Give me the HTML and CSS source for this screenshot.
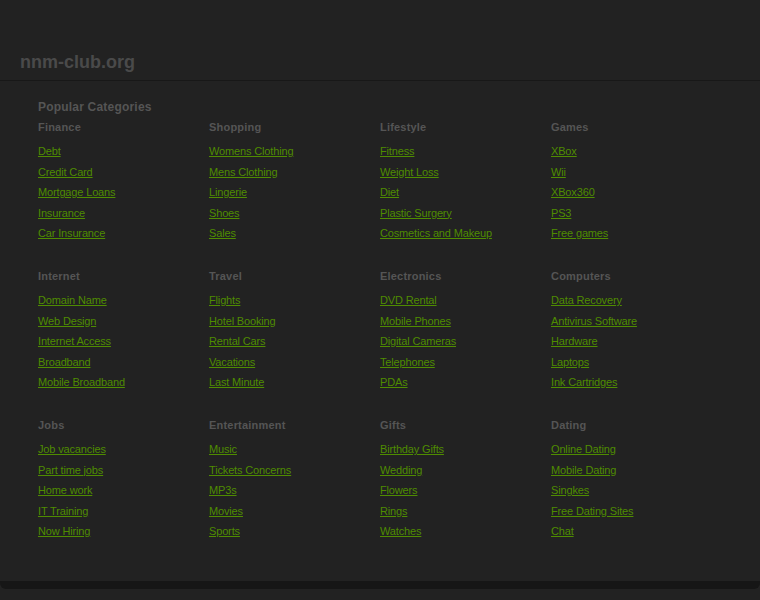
FILE: index.html
```html
<!DOCTYPE html>
<html>
<head>
<meta charset="utf-8">
<title>nnm-club.org</title>
<link rel="stylesheet" href="styles.css">
</head>
<body>
<div class="header"><span class="site">nnm-club.org</span></div>
<div class="content">
  <h2 class="title">Popular Categories</h2>
  <div class="grid">
    <div class="cat"><h3>Finance</h3><ul><li><a href="#">Debt</a></li><li><a href="#">Credit Card</a></li><li><a href="#">Mortgage Loans</a></li><li><a href="#">Insurance</a></li><li><a href="#">Car Insurance</a></li></ul></div>
    <div class="cat"><h3>Shopping</h3><ul><li><a href="#">Womens Clothing</a></li><li><a href="#">Mens Clothing</a></li><li><a href="#">Lingerie</a></li><li><a href="#">Shoes</a></li><li><a href="#">Sales</a></li></ul></div>
    <div class="cat"><h3>Lifestyle</h3><ul><li><a href="#">Fitness</a></li><li><a href="#">Weight Loss</a></li><li><a href="#">Diet</a></li><li><a href="#">Plastic Surgery</a></li><li><a href="#">Cosmetics and Makeup</a></li></ul></div>
    <div class="cat"><h3>Games</h3><ul><li><a href="#">XBox</a></li><li><a href="#">Wii</a></li><li><a href="#">XBox360</a></li><li><a href="#">PS3</a></li><li><a href="#">Free games</a></li></ul></div>
    <div class="cat"><h3>Internet</h3><ul><li><a href="#">Domain Name</a></li><li><a href="#">Web Design</a></li><li><a href="#">Internet Access</a></li><li><a href="#">Broadband</a></li><li><a href="#">Mobile Broadband</a></li></ul></div>
    <div class="cat"><h3>Travel</h3><ul><li><a href="#">Flights</a></li><li><a href="#">Hotel Booking</a></li><li><a href="#">Rental Cars</a></li><li><a href="#">Vacations</a></li><li><a href="#">Last Minute</a></li></ul></div>
    <div class="cat"><h3>Electronics</h3><ul><li><a href="#">DVD Rental</a></li><li><a href="#">Mobile Phones</a></li><li><a href="#">Digital Cameras</a></li><li><a href="#">Telephones</a></li><li><a href="#">PDAs</a></li></ul></div>
    <div class="cat"><h3>Computers</h3><ul><li><a href="#">Data Recovery</a></li><li><a href="#">Antivirus Software</a></li><li><a href="#">Hardware</a></li><li><a href="#">Laptops</a></li><li><a href="#">Ink Cartridges</a></li></ul></div>
    <div class="cat"><h3>Jobs</h3><ul><li><a href="#">Job vacancies</a></li><li><a href="#">Part time jobs</a></li><li><a href="#">Home work</a></li><li><a href="#">IT Training</a></li><li><a href="#">Now Hiring</a></li></ul></div>
    <div class="cat"><h3>Entertainment</h3><ul><li><a href="#">Music</a></li><li><a href="#">Tickets Concerns</a></li><li><a href="#">MP3s</a></li><li><a href="#">Movies</a></li><li><a href="#">Sports</a></li></ul></div>
    <div class="cat"><h3>Gifts</h3><ul><li><a href="#">Birthday Gifts</a></li><li><a href="#">Wedding</a></li><li><a href="#">Flowers</a></li><li><a href="#">Rings</a></li><li><a href="#">Watches</a></li></ul></div>
    <div class="cat"><h3>Dating</h3><ul><li><a href="#">Online Dating</a></li><li><a href="#">Mobile Dating</a></li><li><a href="#">Singkes</a></li><li><a href="#">Free Dating Sites</a></li><li><a href="#">Chat</a></li></ul></div>
  </div>
</div>
<div class="bottom"></div>
</body>
</html>
```
FILE: styles.css
```css
html, body {
  margin: 0;
  padding: 0;
  background: #222222;
  font-family: "Liberation Sans", Arial, sans-serif;
}
.header {
  height: 81px;
  box-sizing: border-box;
  padding: 51px 0 0 20px;
  border-bottom: 1px solid #181818;
}
.site {
  display: block;
  font-size: 18px;
  line-height: 22px;
  font-weight: bold;
  color: #4a4a4a;
}
.content {
  padding: 18px 38px 0 38px;
  height: 500px;
  box-sizing: border-box;
}
.title {
  margin: 0 0 4px 0;
  font-size: 12px;
  line-height: 16px;
  font-weight: bold;
  letter-spacing: 0.2px;
  color: #555555;
}
.grid {
  display: grid;
  grid-template-columns: repeat(4, 171px);
  row-gap: 24.5px;
}
.cat h3 {
  margin: 0 0 6px 0;
  font-size: 11px;
  line-height: 16px;
  font-weight: bold;
  letter-spacing: 0.2px;
  color: #555555;
}
.cat ul {
  list-style: none;
  margin: 0;
  padding: 0;
}
.cat li {
  font-size: 11px;
  line-height: 20.5px;
  letter-spacing: -0.15px;
}
.cat a {
  color: #4f8c00;
  text-decoration: underline;
}
.bottom {
  height: 8px;
  background: #161616;
  border-radius: 0 0 6px 6px;
}
```
